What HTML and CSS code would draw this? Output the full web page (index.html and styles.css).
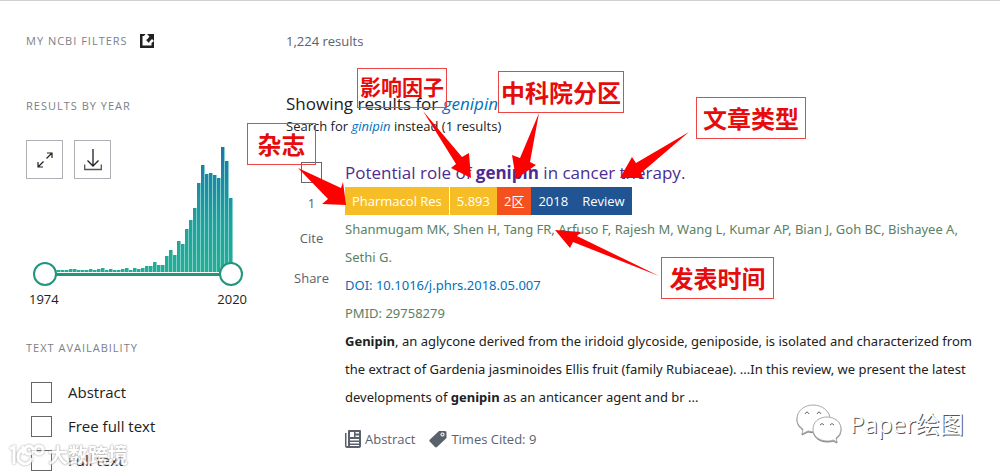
FILE: index.html
```
<!DOCTYPE html>
<html lang="en">
<head>
    <meta charset="UTF-8">
    <meta name="viewport" content="width=device-width, initial-scale=1.0">
    <title>genipin - Search Results</title>
    <link rel="stylesheet" href="styles.css">
</head>
<body>
    <div class="page">
        <aside class="filters">
            <h3 class="filter-title">MY NCBI FILTERS
                <a href="#" aria-label="Open filters">
                    <svg width="14" height="14" viewBox="0 0 14 14"><path fill="#212121" d="M0 0h5.500L4 2H2.500v9.500h9V9L14 7v7H0z"/><path fill="#212121" d="M7 0h7v7l-2-2-2.500 2.500-.5 1.500-3-3 1.500-1L9.500 2.500z"/></svg>
                </a>
            </h3>
            <h3 class="filter-title year-title">RESULTS BY YEAR</h3>
            <div class="timeline">
                <div class="tools">
                    <button type="button" aria-label="Expand">
                        <svg width="16" height="16" viewBox="0 0 16 16" fill="none" stroke="#212121" stroke-width="1.200"><path d="M9.500 6.500L15 1M10 1h5v5M6.500 9.500L1 15M1 10v5h5"/></svg>
                    </button>
                    <button type="button" class="download" aria-label="Download">
                        <svg width="18" height="22" viewBox="0 0 18 22" fill="none" stroke="#212121" stroke-width="1.300"><path d="M9 0v17M3.500 11.500L9 17l5.500-5.500"/><path d="M.7 15.500v5h16.600v-5" stroke="#555"/></svg>
                    </button>
                </div>
                <div class="bars" id="bars"></div>
            </div>
            <div class="slider">
                <input type="range" min="1974" max="2020" value="1974" aria-label="From year">
                <input type="range" min="1974" max="2020" value="2020" aria-label="To year">
            </div>
            <div class="years"><span>1974</span><span>2020</span></div>
            <h3 class="filter-title text-title">TEXT AVAILABILITY</h3>
            <label class="option"><input type="checkbox"> Abstract</label>
            <label class="option"><input type="checkbox"> Free full text</label>
            <label class="option"><input type="checkbox"> Full text</label>
        </aside>

        <main>
            <div class="count">1,224 results</div>
            <div class="showing">Showing results for <a href="#"><i>genipin</i></a></div>
            <div class="instead">Search for <a href="#"><i>ginipin</i></a> instead (1 results)</div>
            <article>
                <div class="side">
                    <input type="checkbox" aria-label="Select result 1">
                    <span class="number">1</span>
                    <button type="button">Cite</button>
                    <button type="button">Share</button>
                </div>
                <div class="result">
                    <h2><a href="#">Potential role of <b>genipin</b> in cancer therapy.</a></h2>
                    <div class="badges">
                        <span class="journal">Pharmacol Res</span>
                        <span class="factor">5.893</span>
                        <span class="zone">2区</span>
                        <span class="date">2018</span>
                        <span class="type">Review</span>
                    </div>
                    <p class="authors">Shanmugam MK, Shen H, Tang FR, Arfuso F, Rajesh M, Wang L, Kumar AP, Bian J, Goh BC, Bishayee A,<br>Sethi G.</p>
                    <p><a class="doi" href="#">DOI: 10.1016/j.phrs.2018.05.007</a></p>
                    <p class="pmid">PMID: 29758279</p>
                    <p><b>Genipin</b>, an aglycone derived from the iridoid glycoside, geniposide, is isolated and characterized from<br>the extract of Gardenia jasminoides Ellis fruit (family Rubiaceae). ...In this review, we present the latest<br>developments of <b>genipin</b> as an anticancer agent and br ...</p>
                    <div class="links">
                        <a href="#">
                            <svg width="16" height="18" viewBox="0 0 16 18"><path fill="#5b616b" d="M0 3h1.500v13H3v2H2q-2 0-2-2z"/><path fill="#5b616b" fill-rule="evenodd" d="M4 0h11q1 0 1 1v15q0 2-2 2H3V1q0-1 1-1zm1 2v5h4V2zm5.500 0v1.500H14V2zm0 3.500V7H14V5.500zM5 9v1.500h9V9zm0 3v1.500h9V12zm0 3v1h9v-1z"/></svg>
                            Abstract</a>
                        <a href="#">
                            <svg width="18" height="18" viewBox="0 0 18 18"><path fill="#5b616b" fill-rule="evenodd" d="M10 1h6q1.500 0 1.500 1.500V8L8 17q-1 .8-2 0L.7 11.500q-.8-.8 0-1.700zm3.500 1.500a2 2 0 1 0 .01 0z"/><circle cx="13.500" cy="4.500" r="1" fill="#5b616b"/></svg>
                            Times Cited: 9</a>
                    </div>
                </div>
            </article>
        </main>

        <!-- notes drawn over the result -->
        <svg class="arrows" width="1000" height="472" viewBox="0 0 1000 472" fill="#f00">
            <path d="M298 168L341 188 343 182 346 205 322 204 328 199z"/>
            <path d="M423 111L462 157 469 153 471 178 451 168 456 164z"/>
            <path d="M539 113L530 162 536 165 516 179 512 155 520 158z"/>
            <path d="M689 132L641 173 643 178 620 178 632 157 636 163z"/>
            <path d="M659 276L577 236 581 232 555 230 570 248 573 242z"/>
        </svg>
        <div class="note note-journal">杂志</div>
        <div class="note note-factor">影响因子</div>
        <div class="note note-zone">中科院分区</div>
        <div class="note note-type">文章类型</div>
        <div class="note note-date">发表时间</div>

        <div class="mark mark-left">
            <svg width="38" height="26" viewBox="0 0 38 26" fill="none" stroke="#fff" stroke-width="3"><path d="M2 6l4-2v17M15 6q-5 3-5 8t6 7q6 0 8-6M15 3v8"/><circle cx="21" cy="7" r="4"/><circle cx="31" cy="7" r="4"/></svg>
            大数跨境
        </div>
        <div class="mark mark-right">
            <svg width="46" height="40" viewBox="0 0 46 40" fill="#fff" stroke="#aaa" stroke-width="1"><path d="M17 1C8 1 1 7 1 15c0 5 3 8 6 10l-1 5 6-3c13 3 22-3 22-12C34 7 26 1 17 1z"/><path d="M31 13c-8 0-14 5-14 12s6 12 14 12c2 0 4 0 6-1l4 2-1-4c3-2 5-5 5-9 0-7-6-12-14-12z"/><path fill="none" stroke="#666" d="M9 10q2-4 4 0M21 10q2-4 4 0M24 21q2-3 4 0M34 21q2-3 4 0"/></svg>
            Paper绘图
        </div>
    </div>

    <script>
        // results per year, 1974 - 2020
        const counts = [2, 2, 2, 2, 2, 2, 2, 2, 2, 3, 3, 2, 2, 2, 3, 2, 3, 4, 2, 3, 2, 2, 3, 4, 2, 4, 3, 4, 6, 6, 10, 7, 7,
            16, 22, 17, 31, 28, 43, 52, 64, 89, 107, 98, 99, 97, 94, 125, 111, 74].slice(-47);
        const bars = document.getElementById('bars');

        counts.forEach(function (count) {
            const bar = document.createElement('div');
            bar.style.height = count + 'px';
            bars.appendChild(bar);
        });
    </script>
</body>
</html>
```
FILE: styles.css
```
* {
    box-sizing: border-box;
}
body {
    margin: 0;
    font-family: "Open Sans", "Noto Sans CJK SC", sans-serif;
    font-size: 13px;
    line-height: 20px;
    color: #212121;
    background-color: #fff;
}
a {
    color: #0071bc;
    text-decoration: none;
}
button {
    font: inherit;
    color: #5b616b;
    background: none;
    border: none;
    padding: 0;
}
input[type="checkbox"] {
    appearance: none;
    width: 21px;
    height: 21px;
    margin: 0;
    border: 1px solid #666;
    background-color: #fff;
}
.page {
    position: relative;
    display: grid;
    grid-template-columns: 260px 1fr;
    border-top: 1px solid #d0d0d0;
    padding: 30px 0 0 26px;
    overflow: hidden;
}
.filter-title {
    display: flex;
    align-items: center;
    gap: 12px;
    margin: 0;
    font-size: 11px;
    font-weight: normal;
    letter-spacing: 1px;
    color: #7b8089;
}
.filter-title svg {
    display: block;
}
.year-title {
    margin-top: 45px;
}
.timeline {
    display: grid;
    height: 132px;
    margin-top: 24px;
}
.tools {
    grid-area: 1 / 1;
    display: flex;
    align-items: flex-start;
    gap: 11px;
}
.tools button {
    display: flex;
    align-items: center;
    justify-content: center;
    width: 37px;
    height: 39px;
    border: 1px solid #aeb0b5;
}
.bars {
    grid-area: 1 / 1;
    display: flex;
    align-items: flex-end;
    width: 188px;
    margin-left: 19px;
}
.bars div {
    width: 4px;
    border-right: 1px solid #7fd0cf;
    background: linear-gradient(#2271ae, #20a29b 60%, #22b08c) bottom / 100% 125px no-repeat;
}
.slider {
    display: grid;
    width: 210px;
    height: 24px;
    margin: -10px 0 0 7px;
    background: linear-gradient(#21967c, #21967c) center / 186px 3px no-repeat;
}
.slider input {
    grid-area: 1 / 1;
    appearance: none;
    width: 100%;
    height: 24px;
    margin: 0;
    background: none;
    pointer-events: none;
}
.slider input::-webkit-slider-thumb {
    appearance: none;
    width: 24px;
    height: 24px;
    border: 2px solid #21967c;
    border-radius: 50%;
    background-color: #fff;
    pointer-events: auto;
}
.years {
    display: flex;
    justify-content: space-between;
    width: 218px;
    margin: 3px 0 0 3px;
}
.text-title {
    margin: 29px 0 17px;
}
.option {
    display: flex;
    align-items: center;
    gap: 16px;
    height: 34px;
    padding-left: 5px;
    font-size: 15px;
}
.count {
    color: #5b616b;
}
.showing {
    margin-top: 40px;
    font-size: 17px;
    line-height: 26px;
}
.instead {
    line-height: 18px;
}
article {
    display: flex;
    margin-top: 24px;
}
.side {
    display: flex;
    flex-direction: column;
    align-items: center;
    width: 51px;
    padding-top: 3px;
    color: #5b616b;
}
.side .number {
    margin-top: 10px;
}
.side button {
    margin-top: 15px;
}
.side button + button {
    margin-top: 20px;
}
.result {
    margin-left: 8px;
}
h2 {
    margin: 0;
    font-size: 17px;
    font-weight: normal;
    line-height: 28px;
}
h2 a {
    color: #4c2c92;
}
.badges {
    display: flex;
    line-height: 28px;
    color: #fff;
}
.badges span {
    padding: 0 7px;
}
.badges .journal,
.badges .factor {
    background-color: #f6bd27;
}
.badges .factor {
    border-left: 1px solid #fff;
}
.badges .zone {
    background-color: #f4511e;
}
.badges .date,
.badges .type {
    background-color: #205493;
}
.result p {
    margin: 0;
    font-family: "Noto Sans", sans-serif;
    line-height: 28px;
    white-space: nowrap;
}
.result .authors,
.result .pmid {
    color: #598166;
}
.links {
    display: flex;
    gap: 14px;
    margin-top: 18px;
}
.links a {
    display: flex;
    align-items: center;
    gap: 4px;
    color: #5b616b;
}
.arrows {
    position: absolute;
    top: -1px;
    left: 0;
    pointer-events: none;
}
.note {
    position: absolute;
    display: flex;
    align-items: center;
    justify-content: center;
    height: 42px;
    border: 1px solid #ee4444;
    font-family: "Noto Sans CJK SC", sans-serif;
    font-size: 24px;
    font-weight: bold;
    color: #e60c0c;
}
.note-journal {
    top: 122px;
    left: 247px;
    width: 69px;
}
.note-factor {
    top: 67px;
    left: 357px;
    width: 90px;
    height: 40px;
    padding-bottom: 4px;
    font-size: 21px;
}
.note-zone {
    top: 70px;
    left: 498px;
    width: 126px;
}
.note-type {
    top: 96px;
    left: 696px;
    width: 110px;
}
.note-date {
    top: 256px;
    left: 661px;
    width: 113px;
}
.mark {
    position: absolute;
    display: flex;
    align-items: center;
    color: #fff;
}
.mark-left {
    top: 442px;
    left: 8px;
    gap: 2px;
    font-size: 20px;
    font-weight: bold;
    text-shadow: 0 0 2px #999, 0 0 2px #999;
    opacity: 0.8;
}
.mark-left svg {
    filter: drop-shadow(0 0 1px #888);
}
.mark-right {
    top: 403px;
    left: 796px;
    gap: 8px;
    font-size: 24px;
    text-shadow: 1px 1px 0 #555;
}
.mark-right svg {
    filter: drop-shadow(0 1px 0 #888);
}
```
